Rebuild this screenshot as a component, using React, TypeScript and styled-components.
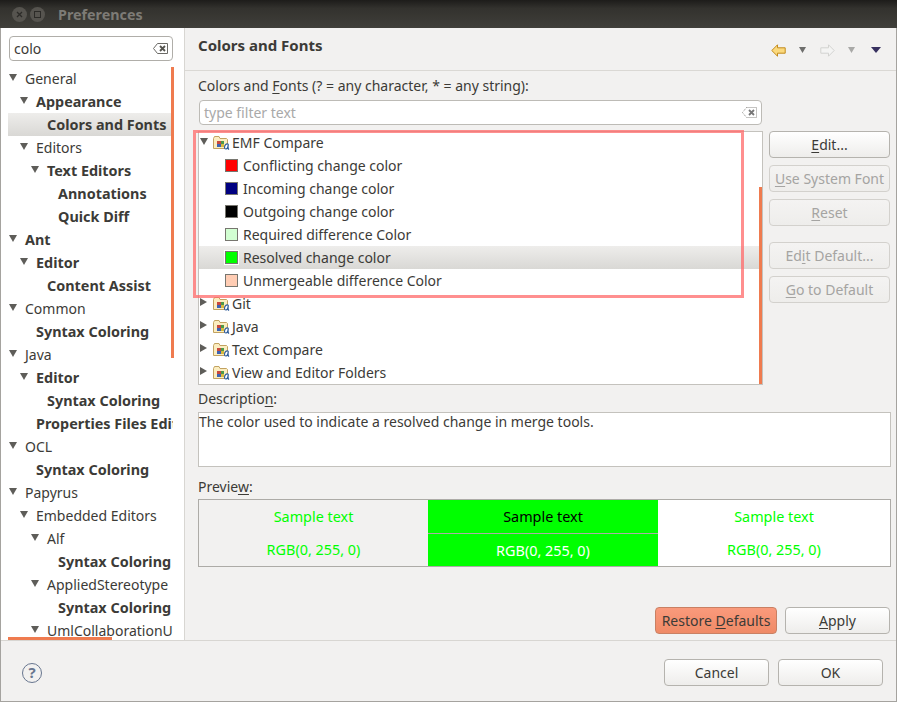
import React from 'react'
import styled, { createGlobalStyle } from 'styled-components'

const GlobalStyle = createGlobalStyle`
  html, body { margin: 0; padding: 0; background: #f2f1f0; }
  body { font-family: "Noto Sans", "Open Sans", sans-serif; font-size: 14px; color: #3c3b37; }
  u { text-underline-offset: 2px; text-decoration-thickness: 1px; }
`

const Window = styled.div`
  width: 897px;
  height: 702px;
  display: flex;
  flex-direction: column;
  overflow: hidden;
  background: #f2f1f0;
`
const TitleBar = styled.div`
  height: 28px;
  flex: none;
  display: flex;
  align-items: center;
  padding-left: 12px;
  gap: 3px;
  background: linear-gradient(#1d1c1a, #33322e 30%, #403f3a);
`
const WinButton = styled.div`
  width: 15px;
  height: 15px;
  border-radius: 50%;
  background: #56544f;
  display: flex;
  align-items: center;
  justify-content: center;
`
const Title = styled.div`
  margin-left: 10px;
  font-weight: 700;
  font-size: 14.3px;
  color: #7d7b76;
`
const Body = styled.div`
  flex: 1;
  min-height: 0;
  display: flex;
  flex-direction: column;
  border: solid #a5a39f;
  border-width: 0 1px 1px;
`
const Main = styled.div`
  flex: 1;
  min-height: 0;
  display: flex;
`
const Sidebar = styled.div`
  position: relative;
  width: 184px;
  flex: none;
  box-sizing: border-box;
  padding: 8px 11px 0 7px;
  background: #fff;
  border-right: 1px solid #d8d6d2;
  display: flex;
  flex-direction: column;
`
const Field = styled.div<{ $muted?: boolean }>`
  height: 25px;
  box-sizing: border-box;
  flex: none;
  display: flex;
  align-items: center;
  justify-content: space-between;
  padding: 0 4px;
  background: #fff;
  border: 1px solid ${p => (p.$muted ? '#bdbbb6' : '#b0aea9')};
  border-radius: 4px;
  color: ${p => (p.$muted ? '#a9a9a9' : '#3c3b37')};
  font-size: 14px;
`
const SearchField = styled(Field)`
  margin-left: 1px;
`
const SideTree = styled.div`
  margin-top: 6px;
  flex: 1;
  min-height: 0;
  overflow: hidden;
`
const RowBox = styled.div<{ $level: number; $selected?: boolean; $bold?: boolean }>`
  height: 23px;
  display: flex;
  align-items: center;
  white-space: nowrap;
  font-weight: ${p => (p.$bold ? 700 : 400)};
  font-size: ${p => (p.$bold ? '14.4px' : '14px')};
  padding-left: ${p => p.$level * 11}px;
  background: ${p => (p.$selected ? 'linear-gradient(#eeedeb, #d9d8d5)' : 'transparent')};
`
const ArrowSlot = styled.span<{ $narrow?: boolean }>`
  width: ${p => (p.$narrow ? 14 : 17)}px;
  flex: none;
  display: flex;
  padding-left: 1px;
  box-sizing: border-box;
`
const Arrow = styled.span<{ $open?: boolean }>`
  width: 0;
  height: 0;
  margin-top: -3px;
  ${p =>
    p.$open
      ? 'border-left: 4px solid transparent; border-right: 4px solid transparent; border-top: 7px solid #5e5d59;'
      : 'border-top: 4px solid transparent; border-bottom: 4px solid transparent; border-left: 7px solid #5e5d59;'}
`
const OrangeBar = styled.div<{ $side: 'top' | 'bottom' | 'tree' }>`
  position: absolute;
  background: #ef7b4f;
  ${p =>
    p.$side === 'top'
      ? 'left: 170px; top: 39px; width: 3px; height: 291px;'
      : p.$side === 'bottom'
        ? 'left: 7px; bottom: 0; width: 104px; height: 3px;'
        : 'right: 0; top: 55px; width: 3px; bottom: 0;'}
`
const Content = styled.div`
  flex: 1;
  min-width: 0;
  display: flex;
  flex-direction: column;
`
const Header = styled.div`
  height: 43px;
  flex: none;
  box-sizing: border-box;
  display: flex;
  align-items: center;
  justify-content: space-between;
  padding: 0 15px 9px 13px;
  border-bottom: 1px solid #dad8d4;
`
const HeaderTitle = styled.div`
  font-weight: 700;
  font-size: 15px;
`
const NavIcons = styled.div`
  display: flex;
  align-items: center;
  margin-top: 11px;
`
const NavGap = styled.span`
  width: 14px;
`
const Pane = styled.div`
  flex: 1;
  min-height: 0;
  display: flex;
  flex-direction: column;
  padding: 5px 6px 6px 13px;
`
const Label = styled.div`
  height: 20px;
  line-height: 20px;
  flex: none;
`
const FilterField = styled(Field)`
  width: 563px;
  margin: 4px 0 6px 1px;
`
const TreeArea = styled.div`
  position: relative;
  display: flex;
  gap: 6px;
  flex: none;
  height: 254px;
`
const TreeBox = styled.div`
  position: relative;
  width: 565px;
  box-sizing: border-box;
  background: #fff;
  border: 1px solid #c4c2bd;
  overflow: hidden;
`
const TreeRows = styled.div`
  margin-top: -1px;
`
const Highlight = styled.div`
  position: absolute;
  left: -5px;
  top: -1px;
  width: 551px;
  height: 168px;
  box-sizing: border-box;
  border: 3px solid rgba(255, 105, 105, 0.75);
  pointer-events: none;
`
const Swatch = styled.span<{ $color: string; $halo?: boolean }>`
  width: 11px;
  height: 11px;
  flex: none;
  background: ${p => p.$color};
  border: 1px solid #77766f;
  margin: 0 5px 0 26px;
  ${p => p.$halo && 'outline: 1px solid #fff;'}
`
const FolderSlot = styled.span`
  width: 17px;
  height: 16px;
  margin-right: 2px;
  flex: none;
  display: flex;
`
const ButtonColumn = styled.div`
  display: flex;
  flex-direction: column;
  width: 121px;
  gap: 7px;
`
const Push = styled.div<{ $disabled?: boolean; $accent?: boolean; $width?: number; $spaced?: boolean }>`
  height: 27px;
  box-sizing: border-box;
  width: ${p => (p.$width ? `${p.$width}px` : 'auto')};
  flex: none;
  display: flex;
  align-items: center;
  justify-content: center;
  white-space: nowrap;
  border-radius: 4px;
  margin-top: ${p => (p.$spaced ? '9px' : '0')};
  border: 1px solid ${p => (p.$accent ? '#c98063' : p.$disabled ? '#d3d1cd' : '#b5b3ae')};
  color: ${p => (p.$disabled ? '#a5a4a2' : '#3c3b37')};
  background: ${p =>
    p.$accent
      ? 'linear-gradient(#fa9a7c, #ef8a66)'
      : p.$disabled
        ? 'linear-gradient(#f4f3f2, #eeedeb)'
        : 'linear-gradient(#ffffff, #eeedeb)'};
`
const DescriptionBox = styled.div`
  height: 55px;
  box-sizing: border-box;
  width: 693px;
  flex: none;
  background: #fff;
  border: 1px solid #c4c2bd;
  line-height: 18px;
  white-space: nowrap;
`
const SectionLabel = styled(Label)<{ $top: number; $bottom: number }>`
  margin-top: ${p => p.$top}px;
  margin-bottom: ${p => p.$bottom}px;
  height: 18px;
  line-height: 18px;
`
const Preview = styled.div`
  width: 693px;
  height: 68px;
  flex: none;
  box-sizing: border-box;
  border: 1px solid #adaba7;
  display: grid;
  grid-template-columns: 229px 230px 1fr;
  grid-template-rows: 33px 33px;
  font-size: 14.4px;
`
const Cell = styled.div<{ $bg: string; $fg: string; $rule?: boolean }>`
  background: ${p => p.$bg};
  color: ${p => p.$fg};
  display: flex;
  align-items: center;
  justify-content: center;
  border-top: ${p => (p.$rule ? '1px solid #adaba7' : '0')};
`
const ApplyRow = styled.div`
  margin-top: auto;
  display: flex;
  justify-content: flex-end;
  gap: 8px;
`
const Footer = styled.div`
  height: 61px;
  flex: none;
  box-sizing: border-box;
  border-top: 1px solid #d8d6d2;
  display: flex;
  align-items: center;
  padding: 3px 13px 0 21px;
  gap: 9px;
`
const Help = styled.div`
  width: 20px;
  height: 20px;
  box-sizing: border-box;
  border: 1.5px solid #68768f;
  border-radius: 50%;
  color: #68768f;
  font-weight: 700;
  font-size: 15px;
  line-height: 17px;
  text-align: center;
  margin-right: auto;
`

const FolderIcon = () => (
  <svg width="17" height="16" viewBox="0 0 17 16">
    <path d="M.5 13.500V3.500l1-2h4.500l1 2h6.500l1 1v9z" fill="#fbedc0" stroke="#c2a260" />
    <rect x="4" y="6" width="4" height="3" fill="#c9483c" />
    <rect x="8" y="6" width="3" height="3" fill="#4d9a4a" />
    <rect x="4" y="9" width="4" height="3" fill="#3b63b5" />
    <rect x="8" y="9" width="3" height="3" fill="#d9b93c" />
    <path d="M15.500 9.500c-2-1.500-4 .5-4 3 0 2 2.500 2 3.200 0l.6-3c-.3 2-.6 4.500.8 5" fill="#fff" stroke="#2f5d9b" strokeWidth="1.200" />
  </svg>
)

const ClearIcon = ({ muted }: { muted?: boolean }) => (
  <svg width="15" height="11" viewBox="0 0 15 11">
    <path
      d="M4.500.5h10v10h-10L.5 5.500z"
      fill="none"
      stroke={muted ? '#8a8985' : '#6b6a66'}
      strokeDasharray={muted ? '1 1' : undefined}
    />
    <path d="M7 3l5 5M12 3L7 8" stroke={muted ? '#777' : '#55544f'} strokeWidth="1.800" />
  </svg>
)

const Drop = ({ color, left, width = 7 }: { color: string; left: number; width?: number }) => (
  <svg width={width} height="6" viewBox="0 0 8 6" preserveAspectRatio="none" style={{ marginLeft: left }}>
    <path d="M0 0h8L4 6z" fill={color} />
  </svg>
)

const NavArrow = ({ back }: { back?: boolean }) => (
  <svg width="15" height="13" viewBox="0 0 15 13">
    {back ? (
      <path d="M.8 6.500 6.500.8v3h7.700v5.400H6.500v3z" fill="#fbd97d" stroke="#c28a1c" />
    ) : (
      <path d="M14.200 6.500 8.500.8v3H.8v5.400h7.700v3z" fill="#f4f4f3" stroke="#d3d3d0" />
    )}
  </svg>
)

type SideItem = [string, number, boolean?, boolean?, boolean?]

// label, level, has arrow, bold, selected
const sideItems: SideItem[] = [
  ['General', 0, true],
  ['Appearance', 1, true, true],
  ['Colors and Fonts', 2, false, true, true],
  ['Editors', 1, true],
  ['Text Editors', 2, true, true],
  ['Annotations', 3, false, true],
  ['Quick Diff', 3, false, true],
  ['Ant', 0, true, true],
  ['Editor', 1, true, true],
  ['Content Assist', 2, false, true],
  ['Common', 0, true],
  ['Syntax Coloring', 1, false, true],
  ['Java', 0, true],
  ['Editor', 1, true, true],
  ['Syntax Coloring', 2, false, true],
  ['Properties Files Editor', 1, false, true],
  ['OCL', 0, true],
  ['Syntax Coloring', 1, false, true],
  ['Papyrus', 0, true],
  ['Embedded Editors', 1, true],
  ['Alf', 2, true],
  ['Syntax Coloring', 3, false, true],
  ['AppliedStereotype', 2, true],
  ['Syntax Coloring', 3, false, true],
  ['UmlCollaborationUseLabel', 2, true],
]

const colorRows: [string, string][] = [
  ['Conflicting change color', '#ff0000'],
  ['Incoming change color', '#000080'],
  ['Outgoing change color', '#000000'],
  ['Required difference Color', '#d2ffd2'],
  ['Resolved change color', '#00ff00'],
  ['Unmergeable difference Color', '#ffcdb4'],
]

const closedGroups = ['Git', 'Java', 'Text Compare', 'View and Editor Folders']

const App = () => (
  <Window>
    <GlobalStyle />
    <TitleBar>
      <WinButton>
        <svg width="7" height="7" viewBox="0 0 7 7">
          <path d="M1 1l5 5M6 1L1 6" stroke="#2c2b28" strokeWidth="1.300" />
        </svg>
      </WinButton>
      <WinButton>
        <svg width="7" height="7" viewBox="0 0 7 7">
          <rect x=".5" y=".5" width="6" height="6" fill="none" stroke="#2c2b28" />
        </svg>
      </WinButton>
      <Title>Preferences</Title>
    </TitleBar>
    <Body>
      <Main>
        <Sidebar>
          <SearchField>
            colo
            <ClearIcon />
          </SearchField>
          <SideTree>
            {sideItems.map(([label, level, arrow, bold, selected], i) => (
              <RowBox key={i} $level={level} $bold={bold} $selected={selected}>
                <ArrowSlot>{arrow && <Arrow $open />}</ArrowSlot>
                {label}
              </RowBox>
            ))}
          </SideTree>
          <OrangeBar $side="top" />
          <OrangeBar $side="bottom" />
        </Sidebar>
        <Content>
          <Header>
            <HeaderTitle>Colors and Fonts</HeaderTitle>
            <NavIcons>
              <NavArrow back />
              <Drop color="#6e6e6c" left={13} />
              <NavGap />
              <NavArrow />
              <Drop color="#a9a9a7" left={13} />
              <Drop color="#37305f" left={16} width={10} />
            </NavIcons>
          </Header>
          <Pane>
            <Label>
              Colors and <u>F</u>onts (? = any character, * = any string):
            </Label>
            <FilterField $muted>
              type filter text
              <ClearIcon muted />
            </FilterField>
            <TreeArea>
              <TreeBox>
                <TreeRows>
                  <RowBox $level={0}>
                    <ArrowSlot $narrow>
                      <Arrow $open />
                    </ArrowSlot>
                    <FolderSlot>
                      <FolderIcon />
                    </FolderSlot>
                    EMF Compare
                  </RowBox>
                  {colorRows.map(([label, color]) => (
                    <RowBox key={label} $level={0} $selected={label.startsWith('Resolved')}>
                      <Swatch $color={color} $halo={label.startsWith('Resolved')} />
                      {label}
                    </RowBox>
                  ))}
                  {closedGroups.map(label => (
                    <RowBox key={label} $level={0}>
                      <ArrowSlot $narrow>
                        <Arrow />
                      </ArrowSlot>
                      <FolderSlot>
                        <FolderIcon />
                      </FolderSlot>
                      {label}
                    </RowBox>
                  ))}
                </TreeRows>
                <OrangeBar $side="tree" />
              </TreeBox>
              <ButtonColumn>
                <Push>
                  <span>
                    <u>E</u>dit...
                  </span>
                </Push>
                <Push $disabled>
                  <span>
                    <u>U</u>se System Font
                  </span>
                </Push>
                <Push $disabled>
                  <span>
                    <u>R</u>eset
                  </span>
                </Push>
                <Push $disabled $spaced>
                  <span>
                    Ed<u>i</u>t Default...
                  </span>
                </Push>
                <Push $disabled>
                  <span>
                    <u>G</u>o to Default
                  </span>
                </Push>
              </ButtonColumn>
              <Highlight />
            </TreeArea>
            <SectionLabel $top={5} $bottom={4}>
              Descriptio<u>n</u>:
            </SectionLabel>
            <DescriptionBox>The color used to indicate a resolved change in merge tools.</DescriptionBox>
            <SectionLabel $top={11} $bottom={3}>
              Previe<u>w</u>:
            </SectionLabel>
            <Preview>
              <Cell $bg="#f2f1f0" $fg="#00ff00">Sample text</Cell>
              <Cell $bg="#00ff00" $fg="#000000">Sample text</Cell>
              <Cell $bg="#ffffff" $fg="#00ff00">Sample text</Cell>
              <Cell $bg="#f2f1f0" $fg="#00ff00">RGB(0, 255, 0)</Cell>
              <Cell $bg="#00ff00" $fg="#ffffff" $rule>RGB(0, 255, 0)</Cell>
              <Cell $bg="#ffffff" $fg="#00ff00">RGB(0, 255, 0)</Cell>
            </Preview>
            <ApplyRow>
              <Push $accent $width={122}>
                <span>
                  Restore <u>D</u>efaults
                </span>
              </Push>
              <Push $width={105}>
                <span>
                  <u>A</u>pply
                </span>
              </Push>
            </ApplyRow>
          </Pane>
        </Content>
      </Main>
      <Footer>
        <Help>?</Help>
        <Push $width={105}>Cancel</Push>
        <Push $width={105}>OK</Push>
      </Footer>
    </Body>
  </Window>
)

export default App
